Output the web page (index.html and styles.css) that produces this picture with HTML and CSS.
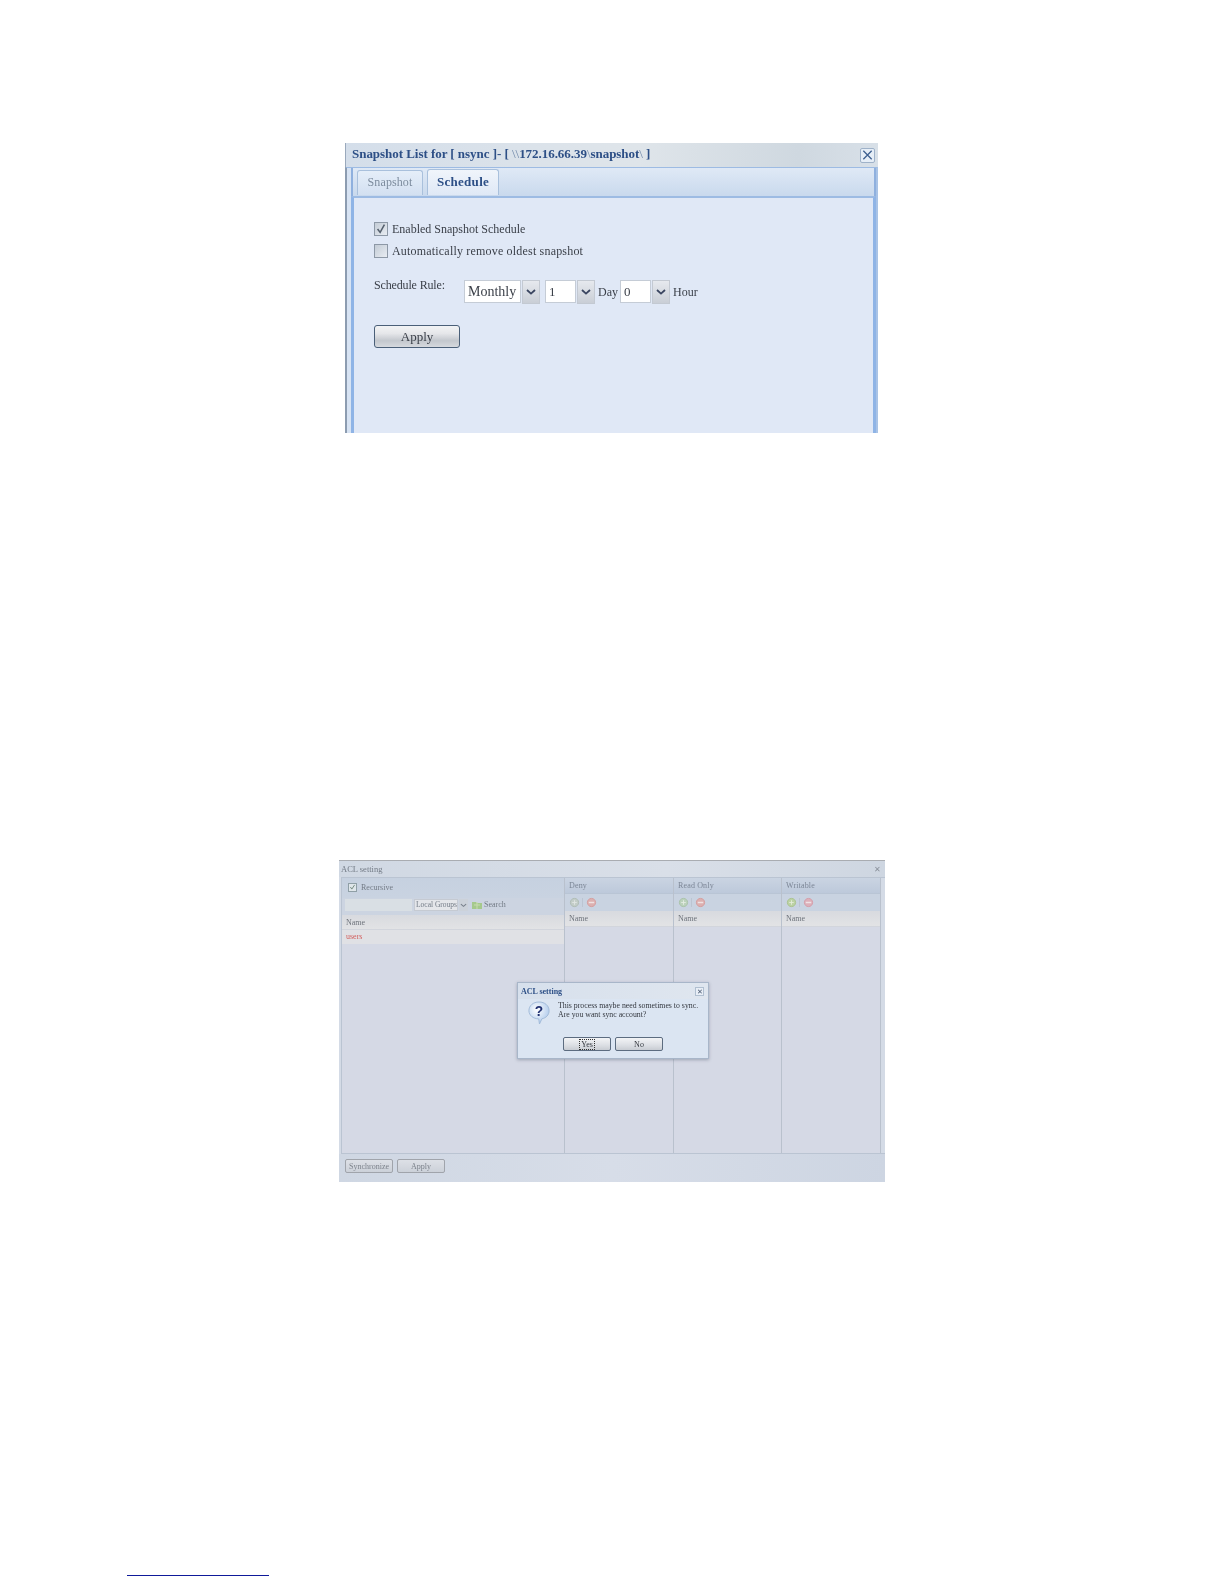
FILE: index.html
```html
<!DOCTYPE html>
<html lang="en">
<head>
<meta charset="utf-8">
<title>Snapshot and ACL settings</title>
<link rel="stylesheet" href="styles.css">
</head>
<body>
<main class="page">
  <section class="snap">
    <header class="snap-title">
      <h1>Snapshot List for [ nsync ]- [ <span class="thin">\\</span>172.16.66.39<span class="thin">\</span>snapshot<span class="thin">\</span> ]</h1>
      <span class="snap-close"><svg viewBox="0 0 14 14" width="14" height="14"><path d="M2.5 2.5l9 9M11.5 2.5l-9 9" stroke="#3d5f90" stroke-width="1.4" fill="none"/></svg></span>
    </header>
    <div class="snap-frame">
      <nav class="tabs">
        <span class="tab">Snapshot</span>
        <span class="tab tab-on">Schedule</span>
      </nav>
      <div class="panel">
        <label class="check-row"><span class="check"><svg viewBox="0 0 14 14" width="12" height="12"><path d="M3 7l3 4 5-9" stroke="#55606e" stroke-width="1.8" fill="none"/></svg></span>Enabled Snapshot Schedule</label>
        <label class="check-row check-long"><span class="check"></span>Automatically remove oldest snapshot</label>
        <div class="rule">
          <span class="rule-label">Schedule Rule:</span>
          <span class="combo combo-month"><span class="combo-val big">Monthly</span><span class="combo-btn"><svg viewBox="0 0 10 6" width="10" height="6"><path d="M1 1l4 3.6L9 1" stroke="#3a4560" stroke-width="1.8" fill="none"/></svg></span></span>
          <span class="combo combo-day"><span class="combo-val">1</span><span class="combo-btn"><svg viewBox="0 0 10 6" width="10" height="6"><path d="M1 1l4 3.6L9 1" stroke="#3a4560" stroke-width="1.8" fill="none"/></svg></span></span>
          <span class="unit">Day</span>
          <span class="combo combo-day"><span class="combo-val">0</span><span class="combo-btn"><svg viewBox="0 0 10 6" width="10" height="6"><path d="M1 1l4 3.6L9 1" stroke="#3a4560" stroke-width="1.8" fill="none"/></svg></span></span>
          <span class="unit">Hour</span>
        </div>
        <button class="apply" type="button">Apply</button>
      </div>
    </div>
  </section>

  <section class="acl">
    <header class="acl-title"><span>ACL setting</span><span class="acl-x">✕</span></header>
    <div class="acl-grid">
      <div class="col col-left">
        <div class="recursive"><span class="mini-check"><svg viewBox="0 0 10 10" width="8" height="8"><path d="M2 5l2 3 4-6" stroke="#6d8478" stroke-width="1.3" fill="none"/></svg></span>Recursive</div>
        <div class="searchrow">
          <span class="search-input"></span>
          <span class="search-select">Local Groups</span>
          <span class="search-arrow"><svg viewBox="0 0 8 5" width="7" height="5"><path d="M1 1l3 2.500L7 1" stroke="#78808c" stroke-width="1.2" fill="none"/></svg></span>
          <svg class="search-icon" viewBox="0 0 10 10" width="10" height="10"><path d="M0 2h4l1 1h5v6H0z" fill="#a5c98c"/><path d="M5 2v7M2 5h6" stroke="#c8dcb0" stroke-width="1"/></svg>
          <span>Search</span>
        </div>
        <div class="name-row name-left">Name</div>
        <div class="user-row">users</div>
      </div>
      <div class="col">
        <div class="col-head">Deny</div>
        <div class="col-tools"><svg class="ico" viewBox="0 0 12 12"><circle cx="6" cy="6" r="4.5" fill="#c3cdc8" stroke="#aebbb4"/><path d="M6 3.5v5M3.5 6h5" stroke="#dfe5e2"/></svg><i class="sep"></i><svg class="ico" viewBox="0 0 12 12"><circle cx="6" cy="6" r="4.5" fill="#dcb0b0" stroke="#d49c9c"/><path d="M3 6h6" stroke="#efe2e2" stroke-width="1.6"/></svg></div>
        <div class="name-row">Name</div>
      </div>
      <div class="col">
        <div class="col-head">Read Only</div>
        <div class="col-tools"><svg class="ico" viewBox="0 0 12 12"><circle cx="6" cy="6" r="4.5" fill="#bcd2bc" stroke="#a8c2a8"/><path d="M6 3.5v5M3.5 6h5" stroke="#e2ebe2"/></svg><i class="sep"></i><svg class="ico" viewBox="0 0 12 12"><circle cx="6" cy="6" r="4.5" fill="#dcb0b0" stroke="#d49c9c"/><path d="M3 6h6" stroke="#efe2e2" stroke-width="1.6"/></svg></div>
        <div class="name-row">Name</div>
      </div>
      <div class="col">
        <div class="col-head">Writable</div>
        <div class="col-tools"><svg class="ico" viewBox="0 0 12 12"><circle cx="6" cy="6" r="4.5" fill="#bcd2a4" stroke="#a8c28c"/><path d="M6 3.5v5M3.5 6h5" stroke="#e2ebd8"/></svg><i class="sep"></i><svg class="ico" viewBox="0 0 12 12"><circle cx="6" cy="6" r="4.5" fill="#dcb0ba" stroke="#d49ca8"/><path d="M3 6h6" stroke="#efe2e5" stroke-width="1.6"/></svg></div>
        <div class="name-row">Name</div>
      </div>
    </div>
    <footer class="acl-foot">
      <button class="ghost-btn" type="button">Synchronize</button>
      <button class="ghost-btn" type="button">Apply</button>
    </footer>

    <div class="dialog">
      <header class="dialog-title"><span>ACL setting</span><span class="dialog-x">✕</span></header>
      <div class="dialog-body">
        <svg class="q-icon" viewBox="0 0 24 26" width="22" height="24"><defs><radialGradient id="qg" cx=".4" cy=".35" r=".7"><stop offset="0" stop-color="#ffffff"/><stop offset="1" stop-color="#a9c6ea"/></radialGradient></defs><path d="M12 1c6.300 0 11 3.900 11 9.500 0 4.800-3.500 8-7.800 8.800L12.500 25l-.8-5.600C5.600 19.300 1 15.500 1 10.500 1 4.900 5.700 1 12 1z" fill="url(#qg)" stroke="#9fb8d6"/><text x="12" y="16" text-anchor="middle" class="q-mark">?</text></svg>
        <p>This process maybe need sometimes to sync.<br>Are you want sync account?</p>
      </div>
      <div class="dialog-btns">
        <button class="dlg-btn" type="button"><span class="focus">Yes</span></button>
        <button class="dlg-btn" type="button">No</button>
      </div>
    </div>
  </section>

  <hr class="foot-rule">
</main>
</body>
</html>
```

FILE: styles.css
```css
* { box-sizing: border-box; }
html, body { margin: 0; padding: 0; background: #fff; }
body { width: 1224px; height: 1584px; overflow: hidden; font-family: "Liberation Serif", serif; }
.page { padding-top: 143px; display: flex; flex-direction: column; }

/* Snapshot window */
.snap { width: 533px; height: 290px; margin-left: 345px; display: flex; flex-direction: column; background: #d5deea; filter: blur(.45px); }
.snap-title { height: 24px; flex: none; display: flex; align-items: center; justify-content: space-between; padding: 0 3px 0 6px; background: linear-gradient(90deg, #d4deea, #dfe5ea 55%, #cfd8e0 85%, #d8e0e8); border-left: 1px solid #9aa9bc; }
.snap-title h1 { margin: 0 0 2px; font-size: 13px; font-weight: bold; color: #2d4f86; letter-spacing: -.04px; white-space: nowrap; }
.thin { font-weight: normal; color: #6d86a8; }
.snap-close { width: 15px; height: 15px; border: 1px solid #9fb2c9; border-radius: 2px; background: #e6eef7; display: flex; align-items: center; justify-content: center; }
.snap-frame { flex: 1; display: flex; flex-direction: column; min-height: 0; border-left: 2px solid #8c9cb0; border-right: 2px solid #a9c3e6; border-top: 1px solid #9dbbe3; background: #d7e3f3; padding-left: 4px; }
.tabs { height: 28px; flex: none; display: flex; align-items: flex-end; gap: 4px; padding: 0 0 1px 4px; background: linear-gradient(#dfe9f6, #c9d9ed); border-left: 2px solid #8fb0de; border-right: 2px solid #8fb0de; }
.tab { width: 66px; height: 25px; padding-bottom: 1px; display: flex; align-items: center; justify-content: center; border: 1px solid #a9c0dc; border-bottom: 0; border-radius: 3px 3px 0 0; background: linear-gradient(#e5eef9, #d3e0f1); color: #7d8c9e; font-size: 12px; letter-spacing: .1px; }
.tab-on { width: 72px; height: 26px; background: linear-gradient(#f0f5fb, #dfe8f6); color: #2d4f86; font-size: 13px; font-weight: bold; letter-spacing: .3px; }
.panel { flex: 1; border-top: 2px solid #9dbbe3; border-left: 3px solid #8fb4e6; border-right: 3px solid #8fb4e6; background: #e0e8f6; padding: 21px 0 0 20px; color: #333; font-size: 12px; }
.check-row { display: flex; align-items: center; gap: 4px; height: 21px; color: #3a3f48; }
.check-row + .check-row { margin-top: 1px; }
.check-long { letter-spacing: .19px; }
.check { width: 14px; height: 14px; flex: none; margin-bottom: 2px; border: 1px solid #8d98a6; background: linear-gradient(135deg, #c4ccd6, #e8ecf2); display: flex; align-items: center; justify-content: center; }
.rule { display: flex; align-items: flex-start; margin-top: 18px; }
.rule-label { width: 90px; height: 16px; line-height: 16px; color: #3a3f48; margin-top: -3px; letter-spacing: -.15px; }
.combo { display: flex; height: 23px; flex: none; }
.combo-month { width: 76px; margin-right: 5px; }
.combo-day { width: 50px; }
.combo-val { flex: 1; min-width: 0; background: #fff; border: 1px solid #c5ccd6; line-height: 22px; padding-left: 3px; font-size: 13px; color: #3a3f48; }
.big { font-size: 14px; padding-left: 3px; }
.combo-btn { width: 18px; flex: none; height: 24px; margin-left: 1px; background: linear-gradient(#e6e9ee, #c9ced6); border: 1px solid #c3c9d2; display: flex; align-items: center; justify-content: center; }
.unit { margin: 0 2px 0 3px; line-height: 24px; color: #3a3f48; }
.apply { display: block; width: 86px; height: 23px; margin-top: 21px; padding: 0; border: 1px solid #4a5f78; border-radius: 3px; background: linear-gradient(#f2f3f5, #e6e7ea 35%, #c3c7cd 70%, #d6d9de); font: 13px "Liberation Serif", serif; color: #3a3f48; }

/* ACL window */
.acl { position: relative; width: 546px; height: 322px; margin: 427px 0 0 339px; display: flex; flex-direction: column; background: #d4dbe6; border-top: 1px solid #a9acb1; color: #737b86; font-size: 8px; filter: blur(.5px); }
.acl-title { height: 16px; flex: none; display: flex; align-items: center; justify-content: space-between; padding: 0 4px 0 2px; background: linear-gradient(90deg, #d0d8e3, #d9dfe8 60%, #ced6e1); font-size: 8.5px; }
.acl-x { font-size: 8px; color: #8a919b; }
.acl-grid { flex: 1; min-height: 0; display: grid; grid-template-columns: 223px 109px 108px 99px; margin-left: 2px; border: 1px solid #bac4d2; border-width: 1px 0 1px 1px; }
.col { display: flex; flex-direction: column; background: #d5d9e5; border-right: 1px solid #b9c1cd; }
.col-left { background: #d5d9e5; }
.recursive { height: 20px; padding: 0 0 2px 6px; display: flex; align-items: center; gap: 4px; background: linear-gradient(#c6d1e0, #c9d3e1); }
.mini-check { width: 9px; height: 9px; border: 1px solid #8f9fa6; background: #dfe6ea; display: flex; align-items: center; justify-content: center; }
.searchrow { height: 17px; display: flex; align-items: flex-start; background: #ccd4e1; padding: 1px 0 0 3px; }
.search-input { width: 67px; height: 12px; background: #d9dfe4; }
.search-select { width: 44px; height: 12px; margin-left: 2px; background: #e4e6ea; border: 1px solid #c5cad2; line-height: 10px; padding-left: 1px; white-space: nowrap; overflow: hidden; font-size: 7.5px; }
.search-arrow { width: 9px; height: 12px; margin-left: 1px; background: #ccd2da; display: flex; align-items: center; justify-content: center; }
.search-icon { margin: 1px 2px 0 4px; }
.searchrow > span:last-child { line-height: 12px; }
.name-row { height: 16px; line-height: 15px; padding-left: 4px; background: linear-gradient(#d8dadf, #e2e3e5); border-bottom: 1px solid #d2d5dc; color: #6e737b; }
.name-left { height: 15px; }
.user-row { height: 14px; line-height: 13px; padding-left: 4px; background: #e0e1e5; color: #d2605f; }
.col-head { height: 16px; line-height: 15px; padding-left: 4px; background: linear-gradient(#cad4e2, #bdc9db); border-bottom: 1px solid #b9c5d5; color: #7c8696; letter-spacing: .15px; }
.col-tools { height: 17px; display: flex; align-items: center; gap: 2px; padding-left: 4px; background: #c9d3e1; }
.ico { width: 11px; height: 11px; flex: none; }
.sep { width: 1px; height: 9px; background: #bcc5d2; margin-right: 1px; }
.acl-foot { height: 28px; flex: none; display: flex; align-items: flex-start; gap: 4px; padding: 5px 0 0 6px; background: linear-gradient(90deg, #cfd7e3, #d7dde8 50%, #cdd5e2); }
.ghost-btn { width: 48px; height: 14px; padding: 0; border: 1px solid #a0a4ab; border-radius: 2px; background: linear-gradient(#dde0e6, #ccd1d9); font: 8px "Liberation Serif", serif; color: #7d838c; }

/* Confirmation dialog */
.dialog { position: absolute; left: 178px; top: 121px; width: 192px; height: 77px; display: flex; flex-direction: column; background: #dbe5f2; border: 1px solid #a8b6c9; box-shadow: 0 1px 3px rgba(90,100,120,.45); color: #333; }
.dialog-title { height: 16px; flex: none; display: flex; align-items: center; justify-content: space-between; padding: 0 4px 0 3px; font-size: 8px; font-weight: bold; color: #2d4f86; background: linear-gradient(90deg, #d7e0ec, #dfe6ef); }
.dialog-x { width: 9px; height: 9px; font-size: 7px; line-height: 9px; text-align: center; font-weight: normal; color: #45566e; border: 1px solid #b0bfd0; background: #e8eef6; }
.dialog-body { display: flex; align-items: flex-start; padding: 2px 0 0 10px; height: 38px; }
.q-icon { flex: none; }
.q-mark { font: bold 15px "Liberation Sans", sans-serif; fill: #1f2f70; }
.dialog-body p { margin: 0 0 0 8px; font-size: 7.8px; line-height: 9px; color: #33373e; white-space: nowrap; }
.dialog-btns { display: flex; gap: 4px; padding-left: 45px; }
.dlg-btn { width: 48px; height: 14px; padding: 0; border: 1px solid #5c6c80; border-radius: 2px; background: linear-gradient(#f3f4f6, #dcdfe4 60%, #c8ccd3); font: 8px "Liberation Serif", serif; color: #33373e; }
.focus { outline: 1px dotted #333; padding: 0 1px; }

/* Footnote rule */
.foot-rule { width: 142px; height: 1px; margin: 393px 0 0 127px; border: 0; background: #0f1a9a; }
```
